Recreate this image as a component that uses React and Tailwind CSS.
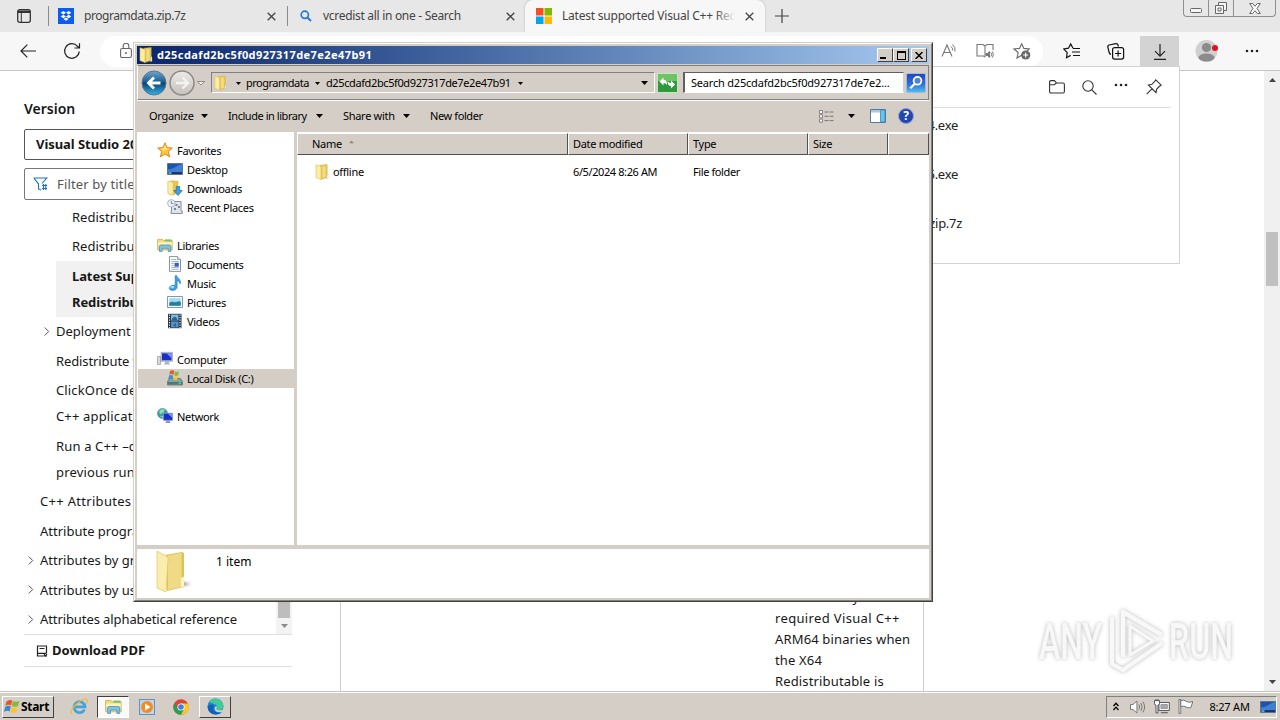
import React from "react";

const Caret = ({ className = "" }) => (
  <svg width="7" height="4" viewBox="0 0 7 4" className={"shrink-0 " + className}>
    <path d="M0 0h7L3.5 4z" fill="currentColor" />
  </svg>
);

const SmallCaret = () => (
  <svg width="5" height="3" viewBox="0 0 5 3" className="shrink-0">
    <path d="M0 0h5L2.5 3z" fill="#000" />
  </svg>
);

const CloseX = () => (
  <svg width="9" height="9" viewBox="0 0 9 9" className="shrink-0">
    <path d="M.7.7l7.6 7.6M8.3.7L.7 8.3" stroke="#444" strokeWidth="1.3" />
  </svg>
);

const Dots = () => (
  <svg width="14" height="4" viewBox="0 0 14 4" fill="#222">
    <circle cx="2" cy="2" r="1.3" />
    <circle cx="7" cy="2" r="1.3" />
    <circle cx="12" cy="2" r="1.3" />
  </svg>
);

const FolderIcon = ({ className = "w-4 h-4" }) => (
  <svg viewBox="0 0 16 16" className={"shrink-0 " + className}>
    <path d="M6 1.2l7.200-.6v13L7 15.400z" fill="#e6c656" stroke="#cfae45" strokeWidth=".5" />
    <path d="M2 .8l5 1.700v13L2 13.600z" fill="#fbeea2" stroke="#dcc05a" strokeWidth=".6" />
    <path d="M8.500 2.500l3-.4v11l-3 .9z" fill="#f3dd80" />
    <path d="M13 9.500l1 .8v3.900l-1.600.2z" fill="#fff" stroke="#b9a766" strokeWidth=".4" />
  </svg>
);

const StarIcon = () => (
  <svg width="16" height="16" viewBox="0 0 16 16">
    <path d="M8 .8l2.1 4.8 5.2.4-4 3.5 1.4 5.4L8 12l-4.7 2.9 1.4-5.4-4-3.5 5.2-.4z" fill="#ffc83a" stroke="#dc7a1c" strokeWidth=".9" />
    <path d="M8 3l1.4 3.4 3 .4-5.9 1.5-2.9-1.4 2.9-.4z" fill="#ffe88a" />
  </svg>
);

const DesktopIcon = () => (
  <svg width="16" height="16" viewBox="0 0 16 16">
    <path d="M.5 2.5h15v11H.5z" fill="#1f53a8" stroke="#5b7594" />
    <path d="M1 8C6 9 10 4 15 3v8H1z" fill="#3f7fd6" />
    <path d="M1 11.3h14V13H1z" fill="#1d3159" />
    <path d="M1.5 11.4h3v1.3h-3z" fill="#7fe0d5" />
  </svg>
);

const DownloadsIcon = () => (
  <svg width="16" height="16" viewBox="0 0 16 16">
    <path d="M1 1.800l4-1 6 .5v12L5 15l-4-1.600z" fill="#e6c656" stroke="#cfae45" strokeWidth=".5" />
    <path d="M1 1l5 1.500V15.300l-5-1.700z" fill="#fbeea2" stroke="#dcc05a" strokeWidth=".5" />
    <path d="M9.300 6.500h3.400v4h2.600L11 15.500 6.800 10.500h2.500z" fill="#3ba0e8" stroke="#1a68ad" strokeWidth=".7" />
  </svg>
);

const RecentIcon = () => (
  <svg width="16" height="16" viewBox="0 0 16 16">
    <path d="M4.5 2.500h9.600v9.700h1.200v2.300H4V12h.5z" fill="#dfe3e8" stroke="#7b8794" strokeWidth=".9" />
    <circle cx="4.300" cy="4.300" r="3.700" fill="#eef2f5" stroke="#9aa7b4" strokeWidth=".8" />
    <path d="M4.300 2v2.500h2" stroke="#4b6a8a" strokeWidth=".8" fill="none" />
    <path d="M8.500 5h2v2h-2zm2.500 2h2v2h-2zM7 9h2v2H7z" fill="#73879b" />
  </svg>
);

const LibraryIcon = ({ className = "w-4 h-4" }) => (
  <svg viewBox="0 0 16 16" className={className}>
    <path d="M.6 2.400h5l1.300 1.200h8.300V13H.6z" fill="#f3dc7c" stroke="#caa545" strokeWidth=".7" />
    <path d="M8 2.400h6.500v2H8z" fill="#7dbf6d" />
    <path d="M1.200 5.200h13.600v3.500H1.200z" fill="#fdf2b8" />
    <path d="M2.500 14.500V9.400Q2.500 8 4 8h8.300q1.500 0 1.500 1.400v5.100h-2.600v-3.200H5.100v3.200z" fill="#7fc4e8" stroke="#3b8bbd" strokeWidth=".7" />
  </svg>
);

const DocumentIcon = () => (
  <svg width="16" height="16" viewBox="0 0 16 16">
    <path d="M2.500.6h8l3 3v11.800h-11z" fill="#fff" stroke="#76879b" strokeWidth=".9" />
    <path d="M10.500.6v3h3" fill="#d4dfea" stroke="#76879b" strokeWidth=".7" />
    <path d="M4.300 3.500h5M4.300 5.500h7.400M4.300 7.500h2.400M4.300 9.500h2.400M4.300 11.500h7.400M4.300 13.300h7.400" stroke="#8fa1b5" strokeWidth=".8" />
    <path d="M7.500 6.800h4.300v3.900H7.500z" fill="#2f66b5" />
  </svg>
);

const MusicIcon = () => (
  <svg width="16" height="16" viewBox="0 0 16 16">
    <path d="M8.200.7h1.600c.3 2.600 4.800 3.300 3.300 8.200-.4-2-1.300-2.900-3-3.200v6.600c0 3.600-7.200 4.200-7.800 1.200-.3-2.300 3.200-4 5.900-3z" fill="#38a3e8" stroke="#1c6fb8" strokeWidth=".6" />
    <ellipse cx="5.300" cy="12.200" rx="2" ry="1.100" fill="#9fdcfa" />
  </svg>
);

const PictureIcon = () => (
  <svg width="16" height="16" viewBox="0 0 16 16">
    <path d="M.5 2.500h15v11H.5z" fill="#fff" stroke="#7d9ab3" />
    <path d="M2.200 4.200h11.600v7.600H2.200z" fill="#9fdaf3" />
    <path d="M2.200 9c3-2.800 5 0 7.300-1 2-1 3-1 4.300 0v3.800H2.200z" fill="#277e9b" />
  </svg>
);

const VideoIcon = () => (
  <svg width="16" height="16" viewBox="0 0 16 16">
    <path d="M1 .8h13.500v14.400H1z" fill="#27313c" />
    <path d="M4 1.500h7.500v6H4z" fill="#79b9e4" />
    <path d="M4 8.500h7.500v6H4z" fill="#4d95cd" />
    <path d="M5 5.500l3-2 2 2v2H5zM6 12l3-2v4z" fill="#355f90" />
    <path d="M2.500 1.500v14M13 1.500v14" stroke="#e9eef2" strokeWidth="1.200" strokeDasharray="1.200 1.300" />
  </svg>
);

const ComputerIcon = () => (
  <svg width="16" height="16" viewBox="0 0 16 16">
    <path d="M.5 5.500h3v8h-3z" fill="#d4d9de" stroke="#8f9aa4" strokeWidth=".7" />
    <path d="M4 1.300h11.500v9H4z" fill="#c5ccd6" stroke="#8793a5" strokeWidth=".6" />
    <path d="M5 2.300h9.500v7H5z" fill="#1a2fc4" />
    <path d="M9.500 2.300h5v5z" fill="#7c95f2" />
    <path d="M8.500 10.500h3l1.500 3H7z" fill="#aab3be" />
  </svg>
);

const DiskIcon = () => (
  <svg width="16" height="16" viewBox="0 0 16 16">
    <path d="M2.500 8.500h11l2 3v3.500H.5v-3.500z" fill="#8ba0a2" stroke="#55686c" strokeWidth=".7" />
    <path d="M1 12h14v2.500H1z" fill="#3d7d84" />
    <path d="M11.500 12.600h2.500v1.200h-2.500z" fill="#71e067" />
    <path d="M3 1q2.500-1.500 4.300 0L6.500 4.700Q4.500 3.500 2.300 4.700z" fill="#e95a26" />
    <path d="M8 1.300q2 1.200 4 0L11.200 5.200q-2 1.200-4 0z" fill="#7fbb3c" />
    <path d="M2 5.400q2.200-1 4.200 0L5.500 9q-2-1-4.200 0z" fill="#3c8fdc" />
    <path d="M7 5.900q2 1.200 4 0l-.8 3.500q-2 1-4 0z" fill="#fbc42e" />
  </svg>
);

const NetworkIcon = () => (
  <svg width="16" height="16" viewBox="0 0 16 16">
    <circle cx="5.500" cy="5.500" r="5" fill="#3b9dba" stroke="#3f7f94" strokeWidth=".6" />
    <path d="M2 3q3-3 6-1.500L6 5 3 6zM3 8l3 0v2z" fill="#8edca0" />
    <path d="M6.500 5.300h9v7h-9z" fill="#1a2fc4" stroke="#8593c9" strokeWidth=".8" />
    <path d="M11 5.700h4.200v4z" fill="#7c95f2" />
    <path d="M9.500 12.500h3l1 2.500h-5z" fill="#8a95b5" />
  </svg>
);

const SearchGlyph = () => (
  <svg width="20" height="20" viewBox="0 0 20 20" className="shrink-0">
    <defs>
      <linearGradient id="sg" x1="0" y1="0" x2="0" y2="1">
        <stop offset="0" stopColor="#2446bd" />
        <stop offset=".55" stopColor="#2f6fd4" />
        <stop offset="1" stopColor="#4dc4f0" />
      </linearGradient>
    </defs>
    <rect x=".5" y=".5" width="19" height="19" rx="1.500" fill="url(#sg)" stroke="#9db8e2" />
    <circle cx="11.500" cy="7.800" r="3.900" fill="#4d83de" stroke="#fff" strokeWidth="1.800" />
    <path d="M8.500 11L4.300 15.200" stroke="#fff" strokeWidth="2.200" />
  </svg>
);

const BrowserTabs = () => (
  <div className="flex h-8 shrink-0 bg-[#e7e7e7] text-[#444]">
    <div className="flex w-12 items-center pl-[17px]">
      <svg width="14" height="14" viewBox="0 0 14 14">
        <rect x=".7" y=".7" width="12.600" height="12.600" rx="2" fill="none" stroke="#333" strokeWidth="1.300" />
        <path d="M1 1.500h12v2.500H1z" fill="#333" />
        <path d="M4.300 4v9" stroke="#333" />
      </svg>
    </div>
    <div className="flex w-[239px] items-center py-1.5">
      <div className="h-5 w-px bg-[#8a8a8a]" />
      <svg width="16" height="16" viewBox="0 0 16 16" className="ml-[9px]">
        <rect width="16" height="16" fill="#0a5cf5" />
        <path d="M5.300 3L8 4.700 5.300 6.400 2.700 4.700zM10.700 3l2.600 1.700-2.600 1.700L8 4.700zM5.300 6.800L8 8.500l-2.700 1.700-2.600-1.700zM10.700 6.800l2.600 1.700-2.600 1.700L8 8.500zM8 9.500l2.500 1.600L8 12.700l-2.500-1.600z" fill="#fff" />
      </svg>
      <span className="ml-2.5 text-[12px] tracking-[-0.45px]">programdata.zip.7z</span>
      <span className="mr-[11px] ml-auto"><CloseX /></span>
    </div>
    <div className="flex w-[238px] items-center">
      <div className="h-5 w-px bg-[#8a8a8a]" />
      <svg width="12" height="12" viewBox="0 0 12 12" className="ml-3">
        <circle cx="4.800" cy="4.800" r="3.600" fill="none" stroke="#2a7bd0" strokeWidth="1.700" />
        <path d="M7.500 7.500l3.500 3.500" stroke="#2a7bd0" strokeWidth="2" />
      </svg>
      <span className="ml-[11px] text-[12px] tracking-[-0.3px]">vcredist all in one - Search</span>
      <span className="mr-[10px] ml-auto"><CloseX /></span>
    </div>
    <div className="flex w-[240px] items-center rounded-t-lg bg-[#f7f7f7] shadow-[0_0_2px_#aaa]">
      <svg width="16" height="16" viewBox="0 0 16 16" className="ml-[11px] shrink-0">
        <path d="M0 0h7.500v7.500H0z" fill="#f25022" />
        <path d="M8.500 0H16v7.500H8.500z" fill="#7fba00" />
        <path d="M0 8.500h7.500V16H0z" fill="#00a4ef" />
        <path d="M8.500 8.500H16V16H8.500z" fill="#ffb900" />
      </svg>
      <div className="relative ml-2.5 w-[173px] overflow-hidden text-[12px] tracking-[-0.22px] whitespace-nowrap">
        Latest supported Visual C++ Red
        <div className="absolute inset-y-0 right-0 w-5 bg-gradient-to-r from-transparent to-[#f7f7f7]" />
      </div>
      <span className="ml-[10px]"><CloseX /></span>
    </div>
    <div className="flex items-center pl-[10px]">
      <svg width="14" height="14" viewBox="0 0 14 14">
        <path d="M7 0v14M0 7h14" stroke="#444" strokeWidth="1.200" />
      </svg>
    </div>
    <div className="mr-1 ml-auto flex h-[17px] rounded-b border border-t-0 border-[#8f8f8f]">
      <div className="flex w-[25px] justify-center border-r border-[#8f8f8f] pt-2">
        <svg width="12" height="5" viewBox="0 0 12 5"><rect x=".5" y=".5" width="11" height="4" rx="1" fill="#f5f5f5" stroke="#666" /></svg>
      </div>
      <div className="flex w-[25px] items-center justify-center border-r border-[#8f8f8f]">
        <svg width="12" height="12" viewBox="0 0 12 12" fill="#f5f5f5" stroke="#666">
          <path d="M3.500.5h8v8h-8z" />
          <path d="M.5 3.500h8v8h-8z" />
          <path d="M3 6h3v3H3z" />
        </svg>
      </div>
      <div className="flex w-[41px] items-center justify-center">
        <svg width="12" height="11" viewBox="0 0 12 11">
          <path d="M.7.5h3L6 3.300 8.300.5h3L8 5.500l3.300 5h-3L6 7.700l-2.300 2.800h-3L4 5.500z" fill="#fff" stroke="#666" />
        </svg>
      </div>
    </div>
  </div>
);

const BrowserToolbar = () => (
  <div className="flex h-[39px] shrink-0 items-center border-b border-[#c6c6c6] bg-[#f7f7f7]">
    <svg width="16" height="14" viewBox="0 0 16 14" className="ml-5">
      <path d="M16 7H1M7.300.7L1 7l6.300 6.300" fill="none" stroke="#222" strokeWidth="1.200" />
    </svg>
    <svg width="18" height="18" viewBox="0 0 18 18" className="ml-[27px]">
      <path d="M16.200 9.500A7.300 7.300 0 1 1 14.500 4.300L16.300 6M16.500 1.300V6h-5" fill="none" stroke="#222" strokeWidth="1.200" />
    </svg>
    <div className="ml-[19px] flex h-[31px] w-[943px] items-center rounded-2xl bg-white">
      <svg width="12" height="16" viewBox="0 0 12 16" className="ml-5">
        <rect x=".6" y="5.500" width="10.800" height="9" rx="1.500" fill="none" stroke="#666" strokeWidth="1.100" />
        <path d="M3.200 5.500V3a2.800 2.800 0 0 1 5.600 0v2.500" fill="none" stroke="#666" strokeWidth="1.100" />
        <circle cx="6" cy="10" r="1" fill="#666" />
      </svg>
      <svg width="17" height="16" viewBox="0 0 17 16" className="ml-auto" fill="none" stroke="#777">
        <path d="M1 13.500L6 2l5 11.500M2.800 9.500h6.400" strokeWidth="1.100" />
        <path d="M10 3.500q2 1.500 1.500 4M11.500 1.500q3.200 2.500 2.500 7" />
      </svg>
      <svg width="18" height="16" viewBox="0 0 18 16" className="ml-[18px]" fill="none" stroke="#777">
        <path d="M9 14L7.500 13H1V1.500h6L9 3l2-1.500h6V7M9 3v11" strokeWidth="1.100" />
        <path d="M10 10.500h1.500l2-2v6l-2-2H10z" fill="#777" />
        <path d="M15 9.500q1.300 2 0 4M16.500 8.500q1.500 3 0 6" />
      </svg>
      <svg width="18" height="17" viewBox="0 0 18 17" className="mr-3 ml-[19px]">
        <path d="M9 12L4 15l1.200-5.500L1 6l5.500-.6L8.700.8l2.200 4.600 5.300.6-2.500 2.300" fill="none" stroke="#666" strokeWidth="1.100" />
        <circle cx="12.700" cy="12" r="4.600" fill="#666" />
        <path d="M12.700 9.500v5M10.200 12h5" stroke="#fff" strokeWidth="1.100" />
      </svg>
    </div>
    <svg width="17" height="16" viewBox="0 0 17 16" className="ml-5" fill="none" stroke="#111" strokeWidth="1.200">
      <path d="M10 5.200L7.700.9 5.500 5.200.8 6l3.400 3.600L3.500 14.700l4.200-2.300" />
      <path d="M10 5.500h7M9 9h8M10 12.500h7" />
    </svg>
    <svg width="18" height="17" viewBox="0 0 18 17" className="ml-[27px]" fill="none" stroke="#111" strokeWidth="1.200">
      <path d="M4 11.500Q2.500 11 2 9L.8 4Q.6 2.500 2 2L9 .7q1.500-.2 2 1.300l.4 1.500" />
      <rect x="5.600" y="4.600" width="11" height="11.500" rx="2" />
      <path d="M11.100 7.500v6M8.100 10.500h6" />
    </svg>
    <div className="ml-[15px] flex h-[34px] w-[39px] items-start justify-center self-end bg-[#d3d3d3] pt-2">
      <svg width="14" height="16" viewBox="0 0 14 16" fill="none" stroke="#222" strokeWidth="1.200">
        <path d="M7 0v12M2 7.200l5 5 5-5M1 15.300h12" />
      </svg>
    </div>
    <svg width="24" height="24" viewBox="0 0 24 24" className="ml-4">
      <circle cx="11.500" cy="12" r="11" fill="#d0d0d0" />
      <circle cx="11.500" cy="8.500" r="4.600" fill="#8b8b8b" />
      <ellipse cx="11.500" cy="18.500" rx="8" ry="4" fill="#8b8b8b" />
      <circle cx="20" cy="9" r="3" fill="#e3101f" />
    </svg>
    <span className="ml-[26px]"><Dots /></span>
  </div>
);

const toc = [
  { lines: ["Redistribute C++ files"], pad: "pl-12" },
  { lines: ["Redistribute manually"], pad: "pl-12" },
  { lines: ["Latest Supported Visual C++", "Redistributable downloads"], pad: "ml-8 pl-4 tracking-[-0.1px]", active: true },
  { lines: ["Deployment examples"], pad: "pl-8", arrow: true },
  { lines: ["Redistribute web client"], pad: "pl-8 tracking-[-0.1px]" },
  { lines: ["ClickOnce deployment for Visual", "C++ applications"], pad: "pl-8 tracking-[0.15px]" },
  { lines: ["Run a C++ –clr application on a", "previous runtime version"], pad: "pl-8 tracking-[0.15px]" },
  { lines: ["C++ Attributes for COM"], pad: "pl-4 tracking-[0.3px]" },
  { lines: ["Attribute programming FAQ"], pad: "pl-4" },
  { lines: ["Attributes by group"], pad: "pl-4", arrow: true },
  { lines: ["Attributes by usage"], pad: "pl-4", arrow: true },
  { lines: ["Attributes alphabetical reference"], pad: "pl-4 tracking-[-0.09px]", arrow: true },
];

const DocsSidebar = () => (
  <div className="ml-6 w-[268px] shrink-0 text-[13px] text-[#171717]">
    <div className="pt-[27px] text-[14px] leading-[22px] font-semibold">Version</div>
    <div className="mt-[9px] flex h-[31px] items-center rounded-[2px] border border-[#555] pt-px pl-[11px] font-bold tracking-[-0.05px]">Visual Studio 2022</div>
    <div className="mt-2 flex h-8 items-center rounded-[2px] border border-[#777] pl-2 text-[#555]">
      <svg width="15" height="14" viewBox="0 0 15 14" fill="none" stroke="#1c6fc4" strokeWidth="1.100">
        <path d="M.8 1h13L9 6.500M.8 1L5.500 6.800V12L8 13" />
        <path d="M9 8.500h5M9 11.500h5M10.500 7v6M12.800 7v6" />
      </svg>
      <span className="ml-[9px] pt-px tracking-[0.15px]">Filter by title</span>
    </div>
    <div className="flex border-b border-[#e0e0e0] pt-0.5">
      <div className="flex-1">
        {toc.map((item) => (
          <div
            key={item.lines[0]}
            className={"relative py-[1.75px] leading-[26px] whitespace-nowrap " + item.pad + (item.active ? " bg-[#f1f1f1] font-bold" : "")}
          >
            {item.arrow && (
              <svg width="6" height="9" viewBox="0 0 6 9" className="absolute top-[10px] -ml-3">
                <path d="M.7.5l4 4-4 4" fill="none" stroke="#555" />
              </svg>
            )}
            {item.lines.map((line) => (
              <div key={line}>{line}</div>
            ))}
          </div>
        ))}
      </div>
      <div className="flex w-4 flex-col justify-end bg-[#f3f3f3]">
        <div className="mx-0.5 h-16 bg-[#bdbdbd]" />
        <div className="flex h-4 items-center justify-center text-[#8b8b8b]"><Caret /></div>
      </div>
    </div>
    <div className="flex h-8 items-center border-b border-[#e0e0e0] pl-3 font-bold">
      <svg width="12" height="12" viewBox="0 0 12 12" fill="none" stroke="#222" strokeWidth="1.200">
        <path d="M10.500 8V1H1.500v10H11M3.500 3.500h5M1.500 8.300h9M8 9l1.500 2L11 9" />
      </svg>
      <span className="ml-1 pt-px text-[13px]">Download PDF</span>
    </div>
  </div>
);

const DocsPage = () => (
  <div className="flex min-h-0 flex-1 overflow-hidden bg-white">
    <DocsSidebar />
    <div className="ml-12 flex w-[584px] flex-col justify-end border-x border-[#ccc]">
      <div className="mb-[-1px] ml-[434px] text-[13px] leading-[21px] tracking-[0.15px] whitespace-nowrap text-[#171717]">
        <div>makes it easy</div>
        <div className="tracking-[0.35px]">required Visual C++</div>
        <div>ARM64 binaries when</div>
        <div>the X64</div>
        <div>Redistributable is</div>
      </div>
    </div>
    <div className="ml-auto flex w-4 flex-col items-center justify-between bg-[#f0f0f0] py-[7px] text-[#444]">
      <Caret className="rotate-180" />
      <div className="mt-[-244px] h-[54px] w-3 bg-[#c0c0c0]" />
      <Caret />
    </div>
  </div>
);

const downloads = ["VC_redist.x64.exe", "VC_redist.x86.exe", "programdata.zip.7z"];

const DownloadsFlyout = () => (
  <div className="absolute top-[66px] left-[819px] h-[198px] w-[361px] border border-[#d2d2d2] bg-white text-[13px] tracking-[-0.3px] text-[#222]">
    <div className="mx-2 flex h-[41px] items-center justify-end border-b border-[#dedede] pr-[9px]">
      <svg width="16" height="14" viewBox="0 0 16 14" fill="none" stroke="#333" strokeWidth="1.100">
        <path d="M.6 11.500V2Q.6.600 2 .6h3.500L7.500 3H14q1.400 0 1.400 1.400v7.200q0 1.400-1.400 1.400H2Q.6 13 .6 11.500zM.6 4.700h4.600L7.500 3" />
      </svg>
      <svg width="15" height="15" viewBox="0 0 15 15" className="ml-[17px]" fill="none" stroke="#333" strokeWidth="1.100">
        <circle cx="6" cy="6" r="5.200" />
        <path d="M9.800 9.800l4.700 4.700" />
      </svg>
      <span className="ml-[17px] pb-1"><Dots /></span>
      <svg width="16" height="16" viewBox="0 0 16 16" className="ml-[18px]" fill="none" stroke="#333" strokeWidth="1.100">
        <path d="M9.800.8l5.400 5.400-1.700 1.100-2.800 2.800-.7 3.500L2.400 6l3.500-.7 2.800-2.800zM6 9.800L.7 15.200" />
      </svg>
    </div>
    {downloads.map((name) => (
      <div key={name} className={"h-[49px] pt-[7px] text-right leading-5 whitespace-nowrap " + (name.endsWith("7z") ? "w-[142px]" : "w-[138px]")}>
        {name}
      </div>
    ))}
  </div>
);

const WinButton = ({ children, className = "" }) => (
  <div
    className={
      "flex h-3.5 w-4 items-center justify-center border border-t-white border-r-[#404040] border-b-[#404040] border-l-white bg-[#d5cec6] " + className
    }
  >
    {children}
  </div>
);

const navItems = [
  { label: "Favorites", icon: <StarIcon />, top: true },
  { label: "Desktop", icon: <DesktopIcon /> },
  { label: "Downloads", icon: <DownloadsIcon /> },
  { label: "Recent Places", icon: <RecentIcon /> },
  null,
  { label: "Libraries", icon: <LibraryIcon />, top: true },
  { label: "Documents", icon: <DocumentIcon /> },
  { label: "Music", icon: <MusicIcon /> },
  { label: "Pictures", icon: <PictureIcon /> },
  { label: "Videos", icon: <VideoIcon /> },
  null,
  { label: "Computer", icon: <ComputerIcon />, top: true },
  { label: "Local Disk (C:)", icon: <DiskIcon />, selected: true },
  null,
  { label: "Network", icon: <NetworkIcon />, top: true },
];

const columns = [
  { label: "Name", cls: "w-[271px] pl-3.5", sorted: true },
  { label: "Date modified", cls: "w-[120px] pl-1" },
  { label: "Type", cls: "w-[120px] pl-1" },
  { label: "Size", cls: "w-20 pl-1" },
  { label: "", cls: "w-[41px]" },
];

const ExplorerWindow = () => (
  <div className="absolute top-[42px] left-[133px] flex h-[560px] w-[800px] flex-col border border-t-[#d5cec6] border-r-[#404040] border-b-[#404040] border-l-[#d5cec6] bg-[#d5cec6] text-[11px] tracking-[-0.3px] text-black">
    <div className="flex min-h-0 flex-1 flex-col border border-t-white border-r-[#808080] border-b-[#808080] border-l-white p-0.5">
      {/* Title bar */}
      <div className="flex h-[18px] shrink-0 items-center bg-gradient-to-r from-[#0a246a] to-[#a6caf0] pr-0.5 pl-px">
        <FolderIcon />
        <span className="ml-[3px] font-bold tracking-[0.42px] text-white">d25cdafd2bc5f0d927317de7e2e47b91</span>
        <WinButton className="ml-auto">
          <div className="mt-1.5 mr-1 h-0.5 w-1.5 bg-black" />
        </WinButton>
        <WinButton>
          <div className="h-[9px] w-[9px] border border-t-2 border-black" />
        </WinButton>
        <WinButton className="ml-0.5">
          <svg width="8" height="7" viewBox="0 0 8 7">
            <path d="M.5 0l7 7M7.500 0l-7 7" stroke="#000" strokeWidth="1.500" />
          </svg>
        </WinButton>
      </div>

      {/* Address bar */}
      <div className="mt-px flex h-[35px] shrink-0 items-center border border-t-[#808080] border-r-[#808080] border-b-[#808080] border-l-white pl-[3px]">
        <svg width="65" height="28" viewBox="0 0 65 28" className="shrink-0">
          <defs>
            <linearGradient id="back" x1="0" y1="0" x2="0" y2="1">
              <stop offset="0" stopColor="#6da6cc" />
              <stop offset=".45" stopColor="#1d5f95" />
              <stop offset=".5" stopColor="#0c4272" />
              <stop offset="1" stopColor="#31b4e6" />
            </linearGradient>
            <linearGradient id="fwd" x1="0" y1="0" x2="0" y2="1">
              <stop offset="0" stopColor="#eceae7" />
              <stop offset="1" stopColor="#c5c1bb" />
            </linearGradient>
          </defs>
          <circle cx="13" cy="14" r="12" fill="url(#back)" stroke="#5b7488" />
          <path d="M19.500 14H8M13 8.500L7.500 14l5.500 5.500" fill="none" stroke="#fff" strokeWidth="2.800" />
          <circle cx="41" cy="14" r="12" fill="url(#fwd)" stroke="#8b8985" strokeWidth="1.500" />
          <path d="M35 14h11M41.500 8.500L47 14l-5.500 5.500" fill="none" stroke="#f4f3f1" strokeWidth="2.400" />
          <path d="M56.500 12.500h7L60 16z" fill="#f4f3f1" stroke="#77736d" strokeWidth=".8" />
        </svg>
        <div className="ml-[5px] flex h-[21px] w-[444px] items-center border border-t-[#808080] border-r-white border-b-white border-l-[#808080] pt-px">
          <FolderIcon className="mb-px ml-px h-[18px] w-[15px]" />
          <span className="ml-2"><SmallCaret /></span>
          <span className="ml-[5px] w-[63px] tracking-[-0.5px] whitespace-nowrap">programdata</span>
          <span className="ml-[6px]"><SmallCaret /></span>
          <span className="ml-[6px] w-[187px] tracking-[-0.39px] whitespace-nowrap">d25cdafd2bc5f0d927317de7e2e47b91</span>
          <span className="ml-[5px]"><SmallCaret /></span>
          <Caret className="mr-1.5 ml-auto" />
        </div>
        <svg width="21" height="20" viewBox="0 0 21 20" className="ml-0.5 shrink-0">
          <rect x=".5" y=".5" width="20" height="19" fill="#2f9a3d" stroke="#c7e5c4" />
          <path d="M1 1h19v7H1z" fill="#6cc463" />
          <path d="M2.500 8.500l4-4V7q4 0 3.500 5-1-2-3.500-2v2.500zM18 11.500l-4 4V13q-3.500 0-3.500-5 1 2 3.500 2V7.500z" fill="#fff" />
        </svg>
        <div className="ml-[5px] flex h-[21px] w-[221px] items-center border border-t-[#606060] border-r-[#d5cec6] border-b-white border-l-2 border-l-[#606060] bg-white pt-px pl-1.5 tracking-[-0.2px] whitespace-nowrap">
          Search d25cdafd2bc5f0d927317de7e2...
        </div>
        <span className="ml-0.5"><SearchGlyph /></span>
      </div>

      {/* Command bar */}
      <div className="flex h-8 shrink-0 items-center border-t border-white pb-px pl-3">
        <span className="w-11">Organize</span>
        <Caret className="ml-2" />
        <span className="ml-5 w-20 tracking-[-0.45px] whitespace-nowrap">Include in library</span>
        <Caret className="ml-2" />
        <span className="ml-5 w-[52px] whitespace-nowrap">Share with</span>
        <Caret className="ml-2" />
        <span className="ml-5 tracking-[-0.4px]">New folder</span>
        <svg width="16" height="13" viewBox="0 0 16 13" className="ml-auto" fill="none">
          <path d="M.5.5h3v3h-3zM.5 4.800h3v3h-3zM.5 9.100h3v3h-3z" fill="#fff" stroke="#777" strokeWidth=".9" />
          <path d="M5.500 2h10M5.500 6.300h10M5.500 10.600h10" stroke="#777" strokeDasharray="4 1" />
        </svg>
        <Caret className="ml-[13px]" />
        <svg width="16" height="14" viewBox="0 0 16 14" className="ml-[15px]">
          <path d="M.5.5h15v13H.5z" fill="#fff" stroke="#4c7ba5" />
          <path d="M1 1h9.500v2.500H1z" fill="#a9c6df" />
          <path d="M10.500 1H15v12h-4.500z" fill="#66c3ea" stroke="#3d87b3" strokeWidth=".8" />
        </svg>
        <div className="mr-[15px] ml-3 flex h-4 w-4 items-center justify-center rounded-full border border-[#8aa0d8] bg-[#2246ae] text-[12px] leading-none font-bold text-white">
          ?
        </div>
      </div>

      {/* Navigation pane and file list */}
      <div className="flex min-h-0 flex-1">
        <div className="w-[157px] shrink-0 bg-white pt-[9px] pl-px">
          {navItems.map((item, i) =>
            item ? (
              <div
                key={item.label}
                className={
                  "flex h-[19px] items-center gap-1 whitespace-nowrap " +
                  (item.top ? "pl-[19px]" : "pl-[29px]") +
                  (item.selected ? " bg-[#d5cec6]" : "")
                }
              >
                <span className="mb-0.5">{item.icon}</span>
                <span className="pt-0.5">{item.label}</span>
              </div>
            ) : (
              <div key={i} className="h-[19px]" />
            ),
          )}
        </div>
        <div className="ml-[3px] flex-1 bg-white">
          <div className="flex h-[23px] border-t border-white bg-[#d5cec6]">
            {columns.map((col) => (
              <div
                key={col.label}
                className={"flex items-center border border-t-white border-r-[#505050] border-b-[#505050] border-l-white whitespace-nowrap " + col.cls}
              >
                {col.label}
                {col.sorted && <Caret className="mb-1 ml-1.5 scale-75 rotate-180 text-[#8b8780]" />}
              </div>
            ))}
          </div>
          <div className="mt-2 flex h-[19px] items-center">
            <FolderIcon className="mb-0.5 ml-[17px] h-4 w-4" />
            <span className="ml-[3px] w-60">offline</span>
            <span className="w-[120px] tracking-[-0.4px]">6/5/2024 8:26 AM</span>
            <span className="tracking-[-0.4px]">File folder</span>
          </div>
        </div>
      </div>

      {/* Details pane */}
      <div className="mt-1 flex h-[49px] shrink-0 bg-white">
        <svg width="40" height="42" viewBox="0 0 40 42" className="mt-0.5 ml-[18px]">
          <defs>
            <radialGradient id="shade">
              <stop offset="0" stopColor="#8a8a8a" />
              <stop offset="1" stopColor="#fff" stopOpacity="0" />
            </radialGradient>
          </defs>
          <ellipse cx="28" cy="33" rx="11" ry="5" fill="url(#shade)" />
          <path d="M10 4l17-3 2 1v34l-17 4z" fill="#dfc15c" />
          <path d="M13 4.500L26.500 2v34L13 39z" fill="#efdb86" />
          <path d="M2 0l11 6v3l-2 32-9-4z" fill="#f9eeae" stroke="#dcc565" strokeWidth=".7" />
          <path d="M26 27l3-1.500v10l-3 1z" fill="#fff5c0" />
        </svg>
        <span className="mt-[5px] ml-[21px] text-[12px] leading-4 tracking-normal">1 item</span>
      </div>
    </div>
  </div>
);

const StartFlag = () => (
  <svg width="16" height="15" viewBox="0 0 16 15">
    <path d="M2.500 2.500Q5.500 0 8.300 1.500L7 6.500Q4 5 1.300 7z" fill="#e8542a" />
    <path d="M9 2q3 1.500 6.500 0L14 7q-3 1.500-6.300 0z" fill="#84b93d" />
    <path d="M1.200 8Q4 6 6.800 7.500L5.500 12.500Q3 11 0 13z" fill="#3a85d8" />
    <path d="M7.500 8q3 1.500 6.300 0l-1.400 5q-3 1.500-6.200 0z" fill="#fcc42d" />
  </svg>
);

const Taskbar = () => (
  <div className="flex h-[29px] shrink-0 items-center border-t border-[#c9c5be] bg-[#d5cec6] pt-px pr-[3px] pl-0.5 text-[11px] text-black shadow-[inset_0_1px_0_#fff]">
    <div className="flex h-[22px] w-[52px] items-center border border-t-white border-r-[#404040] border-b-[#404040] border-l-white pl-px font-bold">
      <StartFlag />
      <span className="ml-px text-[12px] tracking-[-0.3px]">Start</span>
    </div>
    <svg width="18" height="18" viewBox="0 0 18 18" className="ml-4">
      <path d="M14.500 11.500A5.500 5.500 0 1 1 15 8.800H5" fill="none" stroke="#3fa3e0" strokeWidth="2.800" />
      <path d="M2 16Q-1 14 5 7.500 13-.5 16.500 1.500q1.500 1 0 4" fill="none" stroke="#f0b93a" strokeWidth="1.300" />
    </svg>
    <div className="ml-[9px] flex h-[22px] w-8 items-center justify-center border border-t-[#404040] border-r-white border-b-white border-l-[#404040] bg-[#fbfaf9]">
      <LibraryIcon className="h-[17px] w-[17px]" />
    </div>
    <svg width="16" height="16" viewBox="0 0 16 16" className="ml-2.5">
      <rect x=".5" y=".5" width="15" height="15" fill="#b9d7f0" stroke="#5f93c2" />
      <circle cx="8" cy="8" r="6" fill="#f58a1f" />
      <path d="M6 4.500l5.500 3.500L6 11.500z" fill="#fff" />
    </svg>
    <svg width="16" height="16" viewBox="0 0 16 16" className="ml-[18px]">
      <circle cx="8" cy="8" r="7.700" fill="#dc4437" />
      <path d="M1.300 4.200A7.700 7.700 0 0 0 8 15.700l3.300-5.900-6.600 0z" fill="#27a052" />
      <path d="M8 15.700A7.700 7.700 0 0 0 15 4.500H8l3.300 5.300z" fill="#fbc924" />
      <circle cx="8" cy="8" r="3.600" fill="#fff" />
      <circle cx="8" cy="8" r="2.800" fill="#3f7fe8" />
    </svg>
    <div className="ml-2.5 flex h-[22px] w-8 items-center justify-center border border-t-white border-r-[#404040] border-b-[#404040] border-l-white">
      <svg width="17" height="17" viewBox="0 0 17 17">
        <circle cx="8.500" cy="8.500" r="8" fill="#1689d8" />
        <path d="M2 4Q5 .5 8.500.5A8 8 0 0 1 16.500 8q0 4-4.500 4-2.500 0-2-1.500Q11 8 8.500 6.500 6 5 2 4z" fill="#3ecb96" />
        <path d="M.5 8.500Q4 5 7.500 7.500q-2 2-.5 5 2 3 8 1.500Q12.500 17 8 16.500 1 15.500.5 8.500z" fill="#1460b8" />
        <path d="M9.500 8q1 1-.1 2.800.3 1.700 3.600 1.400l3.200-.7-1.700 2.500Q8 15 7.500 10.500q0-2 2-2.500z" fill="#d5cec6" />
      </svg>
    </div>
    <div className="ml-auto flex h-[22px] w-[171px] items-center border border-t-[#808080] border-r-white border-b-white border-l-[#808080] pl-1.5">
      <svg width="6" height="9" viewBox="0 0 6 9" fill="none" stroke="#000" strokeWidth="1.300">
        <path d="M.5 4L3 1.200 5.500 4M.5 8L3 5.200 5.500 8" />
      </svg>
      <svg width="16" height="14" viewBox="0 0 16 14" className="ml-[11px]" fill="#fff" stroke="#6b6b6b" strokeWidth=".9">
        <path d="M.5 4.500H3L7 1v12L3 9.500H.5z" />
        <path d="M9 4.500q1.500 2.500 0 5M11 3q2.500 4 0 8M13 1.500q3.500 5.500 0 11" fill="none" />
      </svg>
      <svg width="16" height="15" viewBox="0 0 16 15" className="ml-2" fill="#fff" stroke="#555" strokeWidth="1">
        <path d="M5 3.500h10.500v8H5zM7 13.800h7" />
        <path d="M7 5.500h6.500v4H7z" fill="#aaa" stroke="#999" />
        <path d="M.5 1.500h5v3q0 1.500-1.500 1.500v8H2V6Q.5 6 .5 4.500zM2 0v2M4 0v2" />
      </svg>
      <svg width="16" height="15" viewBox="0 0 16 15" className="ml-2" fill="#fff" stroke="#666" strokeWidth=".9">
        <path d="M1 .5h1.800v14H1z" />
        <path d="M2.800 1.500Q6 0 8.500 2.500q2.500 1.500 6.500 0L13 8.500q-3 1-5-.5-2-1.500-5.200-.5z" />
      </svg>
      <span className="ml-4 w-[41px] pt-px tracking-[-0.2px] whitespace-nowrap">8:27 AM</span>
      <span className="ml-2.5"><DesktopIcon /></span>
    </div>
  </div>
);

const Watermark = () => (
  <svg
    width="210"
    height="80"
    viewBox="0 0 210 80"
    className="absolute top-[600px] left-[1030px] drop-shadow-[0_0_2px_rgba(0,0,0,0.28)]"
  >
    <g fill="#f8f8f8" fontFamily="Roboto" fontWeight="500" fontSize="50">
      <text x="9" y="59" textLength="63" lengthAdjust="spacingAndGlyphs">ANY</text>
      <text x="139" y="59" textLength="64" lengthAdjust="spacingAndGlyphs">RUN</text>
    </g>
    <g fill="none" stroke="#f8f8f8" strokeWidth="4.500" strokeLinejoin="round">
      <path d="M93 57V12l39 23" />
      <path d="M82 17v47l11 6 39-27" strokeWidth="4" />
      <path d="M100 26v29l23-14z" strokeWidth="3" />
    </g>
  </svg>
);

const App = () => {
  return (
    <div className="relative flex h-[720px] w-[1280px] flex-col overflow-hidden bg-white font-['Noto_Sans','Open_Sans',sans-serif]">
      <BrowserTabs />
      <BrowserToolbar />
      <DocsPage />
      <Taskbar />
      <DownloadsFlyout />
      <Watermark />
      <ExplorerWindow />
    </div>
  );
};

export default App;
